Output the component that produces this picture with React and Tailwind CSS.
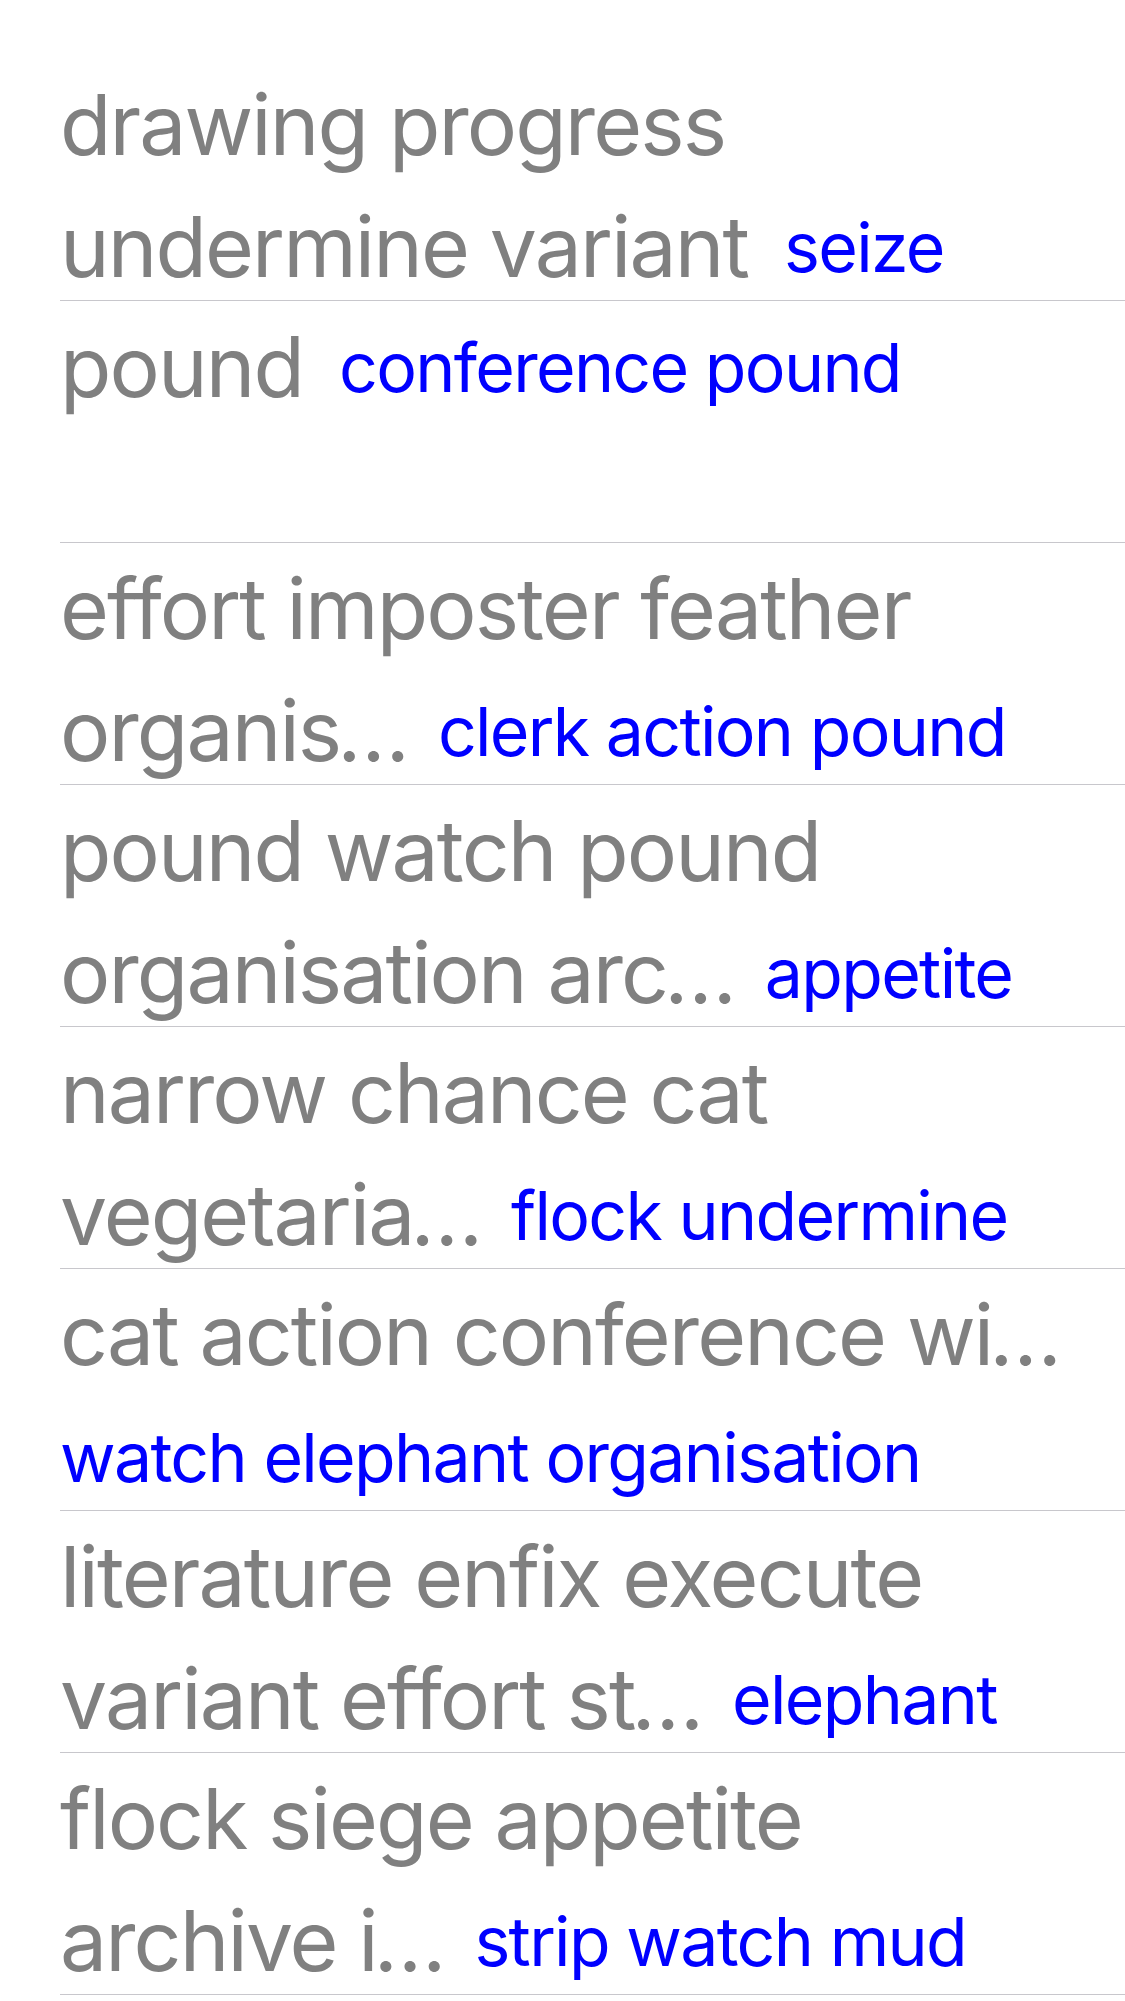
const rows = [
  { lines: [{ title: "drawing progress" }, { title: "undermine variant", detail: "seize" }] },
  { lines: [{ title: "pound", detail: "conference pound" }, {}] },
  { lines: [{ title: "effort imposter feather" }, { title: "organis…", detail: "clerk action pound" }] },
  { lines: [{ title: "pound watch pound" }, { title: "organisation arc…", detail: "appetite" }] },
  { lines: [{ title: "narrow chance cat" }, { title: "vegetaria…", detail: "flock undermine" }] },
  { lines: [{ title: "cat action conference wi…" }, { detail: "watch elephant organisation" }] },
  { lines: [{ title: "literature enfix execute" }, { title: "variant effort st…", detail: "elephant" }] },
  { lines: [{ title: "flock siege appetite" }, { title: "archive i…", detail: "strip watch mud" }] },
];

// SF's ellipsis is narrower than Inter's, so tighten what follows it
const Title = ({ text }) => {
  const cut = text.endsWith("…");
  return (
    <span className="text-[84px] leading-[102px] tracking-[-1.9px] text-[#808080]">
      {cut ? text.slice(0, -1) : text}
      {cut && <span className="ml-[-3px] tracking-[-8px]">…</span>}
    </span>
  );
};

const Line = ({ title, detail }) => (
  <div className="flex h-[102px] items-center whitespace-nowrap">
    {title && <Title text={title} />}
    {detail && (
      <span
        className={`text-[68px] leading-[82px] tracking-[-1.7px] text-[#0000ff] ${title ? "ml-[36px]" : ""}`}
      >
        {detail}
      </span>
    )}
  </div>
);

export default function App() {
  return (
    <div className="min-h-screen bg-white pt-[59px] pl-[60px] font-['Inter',sans-serif]">
      {rows.map((row, i) => (
        <div key={i} className="flex h-[242px] flex-col gap-[20px] border-b border-[#c8c7cc] pt-[15px]">
          {row.lines.map((l, j) => (
            <Line key={j} {...l} />
          ))}
        </div>
      ))}
    </div>
  );
}
